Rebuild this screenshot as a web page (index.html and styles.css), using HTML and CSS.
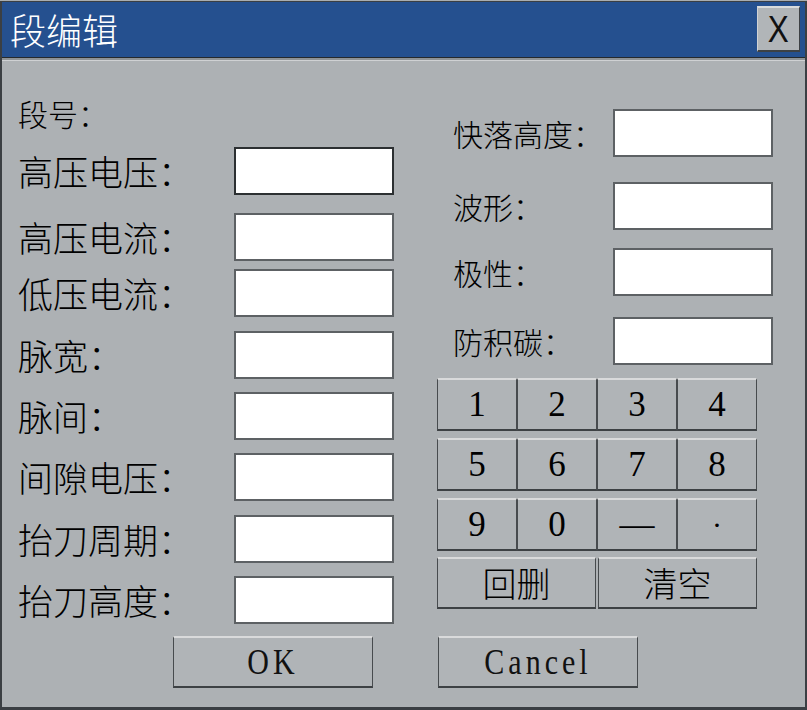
FILE: index.html
```html
<!DOCTYPE html>
<html lang="zh-CN">
<head>
<meta charset="utf-8">
<title>段编辑</title>
<link rel="stylesheet" href="styles.css">
</head>
<body>
<div class="window">
  <div class="titlebar">
    <span class="title">段编辑</span>
    <button class="close"><span>X</span></button>
  </div>
  <div class="panel">
    <div class="cols">
      <div class="left">
        <div class="row seg"><span class="lbl small">段号：</span></div>
        <div class="row"><span class="lbl">高压电压：</span><div class="field active"></div></div>
        <div class="row"><span class="lbl">高压电流：</span><div class="field"></div></div>
        <div class="row"><span class="lbl">低压电流：</span><div class="field"></div></div>
        <div class="row"><span class="lbl">脉宽：</span><div class="field"></div></div>
        <div class="row"><span class="lbl">脉间：</span><div class="field"></div></div>
        <div class="row"><span class="lbl">间隙电压：</span><div class="field"></div></div>
        <div class="row"><span class="lbl">抬刀周期：</span><div class="field"></div></div>
        <div class="row"><span class="lbl">抬刀高度：</span><div class="field"></div></div>
      </div>
      <div class="right">
        <div class="rrow"><span class="rlbl">快落高度：</span><div class="field"></div></div>
        <div class="rrow"><span class="rlbl">波形：</span><div class="field"></div></div>
        <div class="rrow"><span class="rlbl">极性：</span><div class="field"></div></div>
        <div class="rrow"><span class="rlbl">防积碳：</span><div class="field"></div></div>
        <div class="keypad">
          <div class="krow">
            <button class="key">1</button><button class="key">2</button><button class="key">3</button><button class="key">4</button>
          </div>
          <div class="krow">
            <button class="key">5</button><button class="key">6</button><button class="key">7</button><button class="key">8</button>
          </div>
          <div class="krow">
            <button class="key">9</button><button class="key">0</button><button class="key">—</button><button class="key dot">·</button>
          </div>
          <div class="krow wide">
            <button class="key cjk">回删</button><button class="key cjk">清空</button>
          </div>
        </div>
      </div>
    </div>
    <div class="footer">
      <button class="btn"><span>OK</span></button>
      <button class="btn"><span>Cancel</span></button>
    </div>
  </div>
</div>
</body>
</html>
```
FILE: styles.css
```css
html, body {
  margin: 0;
  padding: 0;
  background: #3b3f43;
}

.window {
  box-sizing: border-box;
  width: 807px;
  height: 710px;
  display: flex;
  flex-direction: column;
  padding: 1px 2px 3px 2px;
  border-top: 1px solid #a9adb0;
  background: #3b3f43;
}

.titlebar {
  height: 55px;
  flex: none;
  background: #25508f;
  border-bottom: 1px solid #25292d;
  display: flex;
  align-items: center;
  justify-content: space-between;
  padding: 0 5px 0 8px;
}

.title {
  color: #ffffff;
  font-family: "Noto Sans CJK SC", sans-serif;
  font-weight: 300;
  font-size: 36px;
  line-height: 40px;
  margin-top: -2px;
}

.close {
  box-sizing: border-box;
  width: 43px;
  height: 46px;
  margin-top: -1px;
  padding: 0;
  background: #b1b5b8;
  border-top: 2px solid #d9dbdc;
  border-left: 1px solid #d0d2d4;
  border-right: 1px solid #3d4144;
  border-bottom: 2px solid #3d4144;
  display: flex;
  align-items: center;
  justify-content: center;
}

.close span {
  font-family: "Liberation Sans", sans-serif;
  font-size: 37px;
  color: #111;
  display: inline-block;
  transform: scaleX(0.85);
  line-height: 1;
}

.panel {
  flex: 1;
  background: #adb1b4;
  border-top: 2px solid #8f9396;
  box-shadow: inset 0 1px 0 #cfd1d3;
  display: flex;
  flex-direction: column;
}

.cols {
  display: flex;
}

.left {
  margin-left: 16px;
  padding-top: 29px;
  width: 376px;
  display: flex;
  flex-direction: column;
}

.row {
  height: 48px;
  display: flex;
  align-items: center;
}

.row:nth-child(2) { margin-top: 10px; }
.row:nth-child(3) { margin-top: 18px; }
.row:nth-child(4) { margin-top: 8px; }
.row:nth-child(5) { margin-top: 14px; }
.row:nth-child(6) { margin-top: 13px; }
.row:nth-child(7) { margin-top: 13px; }
.row:nth-child(8) { margin-top: 14px; }
.row:nth-child(9) { margin-top: 13px; }

.lbl {
  width: 216px;
  flex: none;
  font-family: "Noto Sans CJK SC", sans-serif;
  font-weight: 300;
  font-size: 35px;
  line-height: 40px;
  color: #000;
  white-space: nowrap;
}

.lbl.small {
  font-size: 30px;
}

.field {
  box-sizing: border-box;
  width: 160px;
  height: 48px;
  flex: none;
  background: #ffffff;
  border: 2px solid #5d6164;
}

.field.active {
  border-color: #2c3032;
}

.right {
  margin-left: 43px;
  padding-top: 49px;
  width: 336px;
  display: flex;
  flex-direction: column;
}

.rrow {
  height: 48px;
  display: flex;
  align-items: center;
}

.rrow:nth-child(2) { margin-top: 25px; }
.rrow:nth-child(3) { margin-top: 18px; }
.rrow:nth-child(4) { margin-top: 21px; }

.rlbl {
  box-sizing: border-box;
  width: 176px;
  padding-left: 16px;
  flex: none;
  font-family: "Noto Sans CJK SC", sans-serif;
  font-weight: 300;
  font-size: 30px;
  line-height: 36px;
  color: #000;
  white-space: nowrap;
}

.keypad {
  margin-top: 13px;
  width: 320px;
  display: flex;
  flex-direction: column;
  gap: 7px;
}

.krow {
  height: 53px;
  display: grid;
  grid-template-columns: repeat(4, 80px);
}

.krow.wide {
  margin-top: -1px;
  height: 52px;
  grid-template-columns: 159px 159px;
  column-gap: 2px;
}

.key, .btn {
  box-sizing: border-box;
  margin: 0;
  padding: 0;
  background: #b0b4b7;
  border-top: 2px solid #d9dadb;
  border-left: 1px solid #474b4e;
  border-right: 1px solid #474b4e;
  border-bottom: 2px solid #3d4144;
  color: #000;
  display: flex;
  align-items: center;
  justify-content: center;
}

.key {
  font-family: "Liberation Serif", serif;
  font-size: 35px;
  line-height: 1;
}

.key.dot {
  font-size: 30px;
}

.key.cjk {
  font-family: "Noto Sans CJK SC", sans-serif;
  font-weight: 300;
  font-size: 34px;
}

.footer {
  margin-top: 12px;
  padding-left: 171px;
  display: flex;
  gap: 65px;
}

.btn {
  width: 200px;
  height: 52px;
}

.btn span {
  display: inline-block;
  font-family: "Liberation Serif", serif;
  font-size: 30px;
  letter-spacing: 4px;
  line-height: 1;
  color: #111;
  transform: scaleY(1.2);
}
```
